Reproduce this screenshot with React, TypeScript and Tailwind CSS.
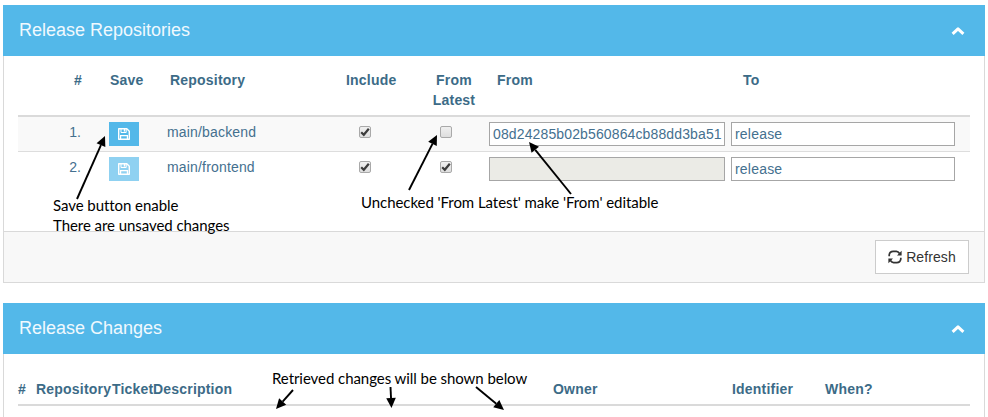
import React from "react";

const SANS = "font-['Liberation_Sans',Arial,sans-serif]";

function Chevron() {
  return (
    <svg viewBox="0 0 14 14" fill="none" stroke="currentColor" strokeWidth="3" className="mt-[3px] size-[14px]">
      <path d="M1.6 9.9 L7 4.9 L12.4 9.9" strokeLinejoin="round" />
    </svg>
  );
}

function Floppy() {
  return (
    <svg viewBox="0 0 12 12" fill="none" stroke="currentColor" className="size-3">
      <path d="M0.7 0.7 H8.8 L11.3 3.2 V11.3 H0.7 Z" strokeWidth="1.4" strokeLinejoin="round" />
      <path d="M3 1 V4.5 H8.2 V1" strokeWidth="1" />
      <path d="M6.5 1 V3.6" strokeWidth="1.4" />
      <path d="M2.6 11 V7.6 H9.4 V11" strokeWidth="1.2" />
    </svg>
  );
}

function RefreshIcon() {
  return (
    <svg viewBox="0 0 14 14" className="size-[14px]" fill="none" stroke="currentColor" strokeWidth="1.7">
      <path d="M1.2 6.2 V4.8 Q1.8 1.3 5.2 1.3 H8.4 Q10.2 1.4 11.6 3.4" />
      <path d="M12.8 7.8 V9.2 Q12.2 12.7 8.8 12.7 H5.6 Q3.8 12.6 2.4 10.6" />
      <path d="M13.6 0.8 V5.4 H9 Z" fill="currentColor" stroke="none" />
      <path d="M0.4 13.2 V8.6 H5 Z" fill="currentColor" stroke="none" />
    </svg>
  );
}

function PanelHeader({ title }: { title: string }) {
  return (
    <div className="flex h-[51px] items-center justify-between bg-[#53b8e9] pr-5 pb-0.5 pl-4 text-white">
      <h2 className="text-lg leading-5 text-[#f0f9fe]">{title}</h2>
      <Chevron />
    </div>
  );
}

function Check({ checked }: { checked: boolean }) {
  return (
    <div className="mt-1 flex size-3 items-center justify-center rounded-[2px] border border-[#a9a9a9] bg-linear-to-b from-[#f0f0f0] to-[#dedede]">
      {checked && (
        <svg viewBox="0 0 10 10" className="size-[10px] shrink-0">
          <path d="M1.2 5.2 L3.8 7.8 L8.8 1.8" fill="none" stroke="#3c3c3c" strokeWidth="2.2" />
        </svg>
      )}
    </div>
  );
}

const COLS = "grid grid-cols-[91px_58px_179px_81px_62px_242px_239px]";

type Repo = { n: string; name: string; include: boolean; latest: boolean; from: string; to: string; dirty: boolean };

const repos: Repo[] = [
  { n: "1.", name: "main/backend", include: true, latest: false, from: "08d24285b02b560864cb88dd3ba51", to: "release", dirty: true },
  { n: "2.", name: "main/frontend", include: true, latest: true, from: "", to: "release", dirty: false },
];

function Row({ r }: { r: Repo }) {
  return (
    <div className={`${COLS} pt-[5px] ${r.dirty ? "h-[35px] border-b border-[#dddddd] bg-[#f9f9f9]" : "h-[34px]"}`}>
      <div className="pr-[28px] text-right leading-5">{r.n}</div>
      <button
        className={`flex h-6 w-[30px] items-center justify-center text-white ${r.dirty ? "bg-[#53b8e9]" : "bg-[#8fd1f1]"}`}
      >
        <Floppy />
      </button>
      <div className="leading-5 tracking-[0.17px]">{r.name}</div>
      <div className="pl-[13px]">
        <Check checked={r.include} />
      </div>
      <div className="pl-[13px]">
        <Check checked={r.latest} />
      </div>
      <div
        className={`flex h-6 w-[236px] items-center overflow-hidden border border-[#a6a6a6] pl-[3px] whitespace-nowrap ${r.latest ? "bg-[#ebebe6]" : "bg-white"}`}
      >
        <span className="tracking-[0.13px]">{r.from}</span>
      </div>
      <div className="flex h-6 w-[224px] items-center border border-[#a6a6a6] bg-white pl-[3px]">
        <span className="tracking-[0.2px]">{r.to}</span>
      </div>
    </div>
  );
}

const NOTE = "absolute font-['Lato',sans-serif] text-[15px] leading-5 tracking-[-0.06px] whitespace-nowrap text-black";

function Arrow({ x1, y1, x2, y2 }: { x1: number; y1: number; x2: number; y2: number }) {
  const len = Math.hypot(x2 - x1, y2 - y1);
  const ux = (x2 - x1) / len;
  const uy = (y2 - y1) / len;
  const bx = x2 - ux * 10;
  const by = y2 - uy * 10;
  return (
    <g>
      <line x1={x1} y1={y1} x2={bx} y2={by} stroke="black" strokeWidth="1.9" />
      <polygon points={`${x2},${y2} ${bx - uy * 4.8},${by + ux * 4.8} ${bx + uy * 4.8},${by - ux * 4.8}`} />
    </g>
  );
}

export default function App() {
  return (
    <div className={`relative h-[417px] w-[988px] overflow-hidden bg-white pt-[5px] pr-[3px] pl-[3px] ${SANS} text-[14px] text-[#44708f]`}>
      <section className="mb-[20px] h-[278px]">
        <PanelHeader title="Release Repositories" />
        <div className="flex h-[227px] flex-col border border-t-0 border-[#d9d9d9]">
          <div className="h-[175px] px-[14px]">
            <div className={`${COLS} h-[61px] border-b-2 border-[#dadada] pt-[14px] leading-5 font-bold tracking-[0.2px] text-[#3c6b87]`}>
              <div className="pr-[27px] text-right">#</div>
              <div className="pl-px">Save</div>
              <div className="pl-[3px]">Repository</div>
              <div>Include</div>
              <div className="w-[62px] pl-[5px]">
                <div className="w-[44px] text-center">From Latest</div>
              </div>
              <div className="pl-2">From</div>
              <div className="pl-3">To</div>
            </div>
            {repos.map((r) => (
              <Row key={r.n} r={r} />
            ))}
          </div>
          <div className="flex flex-1 items-center justify-end border-t border-[#d9d9d9] bg-[#f8f8f8] pr-[15px]">
            <button className="flex h-[34px] w-[94px] items-center justify-center gap-1 border border-[#cccccc] bg-white text-[#333333]">
              <RefreshIcon />
              <span className="tracking-[0.1px]">Refresh</span>
            </button>
          </div>
        </div>
      </section>

      <section>
        <PanelHeader title="Release Changes" />
        <div className="h-[80px] border-x border-[#d9d9d9] px-[14px]">
          <div className="grid h-[52px] grid-cols-[18px_76px_41px_400px_179px_93px_145px] border-b-2 border-[#dadada] pt-[25px] leading-5 font-bold tracking-[0.2px] text-[#3c6b87]">
            <div>#</div>
            <div>Repository</div>
            <div>Ticket</div>
            <div>Description</div>
            <div>Owner</div>
            <div>Identifier</div>
            <div>When?</div>
          </div>
        </div>
      </section>

      <div className={`${NOTE} top-[195px] left-[53px]`}>Save button enable</div>
      <div className={`${NOTE} top-[215px] left-[53px]`}>There are unsaved changes</div>
      <div className={`${NOTE} top-[192px] left-[361px]`}>Unchecked 'From Latest' make 'From' editable</div>
      <div className={`${NOTE} top-[368px] left-[272px]`}>Retrieved changes will be shown below</div>
      <svg width="988" height="417" className="pointer-events-none absolute inset-0">
        <Arrow x1={77} y1={199} x2={105} y2={136} />
        <Arrow x1={409} y1={190} x2={437} y2={135} />
        <Arrow x1={571} y1={194} x2={529} y2={142} />
        <Arrow x1={293} y1={390} x2={276} y2={409} />
        <Arrow x1={390.5} y1={387} x2={391.5} y2={408} />
        <Arrow x1={476} y1={387} x2={504} y2={410} />
      </svg>
    </div>
  );
}
